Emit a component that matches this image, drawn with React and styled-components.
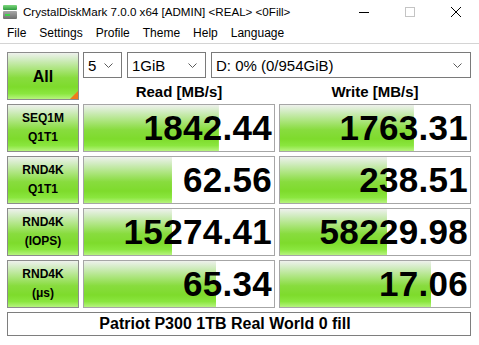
import React from 'react';
import styled, { createGlobalStyle } from 'styled-components';

const Global = createGlobalStyle`
  html, body { margin: 0; padding: 0; background: #fff; }
  body { font-family: "Liberation Sans", Arial, sans-serif; color: #000; overflow: hidden; }
`;

const greenGrad = `linear-gradient(to bottom, #eef1ec 0%, #d2ecc2 14%, #ade57f 34%, #88dc3e 54%, #7edb2c 74%, #8ae63e 88%, #b6f47e 100%)`;

const Window = styled.div`
  width: 479px;
  height: 345px;
  background: #fff;
  display: flex;
  flex-direction: column;
`;

const TitleBar = styled.div`
  height: 23px;
  display: flex;
  align-items: center;
  padding-left: 2px;
`;

const TitleText = styled.div`
  margin-left: 5px;
  font-size: 11.6px;
  flex: 1;
  white-space: nowrap;
`;

const WinControls = styled.div`
  display: flex;
  align-self: stretch;
`;

const WinButton = styled.div`
  width: 46px;
  display: flex;
  align-items: center;
  justify-content: center;
`;

const MenuBar = styled.div`
  height: 20px;
  border-bottom: 1px solid #d4d4d4;
  display: flex;
  align-items: center;
  gap: 13px;
  padding-left: 7px;
  font-size: 12px;
`;

const MenuItem = styled.span`
  white-space: nowrap;
`;

const Main = styled.div`
  padding: 8px 0 0 7px;
  display: grid;
  grid-template-columns: 72px 192px 192px;
  grid-template-rows: repeat(5, 48px) 24px;
  gap: 4px;
`;

const AllButton = styled.div`
  position: relative;
  box-sizing: border-box;
  border: 1px solid #8c8c8c;
  background: ${greenGrad};
  display: flex;
  align-items: center;
  justify-content: center;
  padding-top: 2px;
  font-weight: bold;
  font-size: 16px;
  overflow: hidden;
`;

const Corner = styled.div`
  position: absolute;
  right: 0;
  bottom: 0;
  width: 0;
  height: 0;
  border-left: 8px solid transparent;
  border-bottom: 8px solid #f07a1c;
`;

const HeaderCell = styled.div`
  grid-column: 2 / 4;
  display: flex;
  flex-direction: column;
`;

const ComboRow = styled.div`
  display: flex;
  gap: 5px;
  height: 26px;
`;

const Combo = styled.div`
  box-sizing: border-box;
  width: ${(p) => (p.$w ? `${p.$w}px` : 'auto')};
  flex: ${(p) => (p.$w ? 'none' : '1')};
  border: 1px solid #7a7a7a;
  background: #fff;
  display: flex;
  align-items: center;
  padding: 0 8px 0 4px;
  font-size: 15px;
  white-space: nowrap;
`;

const ComboText = styled.span`
  flex: 1;
`;

const HeadRow = styled.div`
  flex: 1;
  display: grid;
  grid-template-columns: 192px 192px;
  gap: 4px;
  align-items: center;
  padding-top: 5px;
`;

const HeadText = styled.div`
  text-align: center;
  font-weight: bold;
  font-size: 15px;
`;

const LabelBox = styled.div`
  box-sizing: border-box;
  border: 1px solid #8c8c8c;
  background: ${greenGrad};
  display: flex;
  flex-direction: column;
  align-items: center;
  justify-content: center;
  font-weight: bold;
  font-size: 12px;
  line-height: 19px;
`;

const ValueBox = styled.div`
  box-sizing: border-box;
  border: 1px solid #a6a6a6;
  background-color: #fff;
  background-image: ${greenGrad};
  background-repeat: no-repeat;
  display: flex;
  align-items: center;
  justify-content: flex-end;
  padding-right: 2px;
  font-weight: bold;
  font-size: 35px;
  letter-spacing: 0.3px;
`;

const Comment = styled.div`
  grid-column: 1 / 4;
  box-sizing: border-box;
  border: 1px solid #7e7e7e;
  display: flex;
  align-items: center;
  justify-content: center;
  padding-right: 28px;
  font-weight: bold;
  font-size: 16px;
`;

const Chevron = () => (
  <svg width="9" height="5" viewBox="0 0 9 5">
    <path d="M0.5 0.5 L4.5 4.5 L8.5 0.5" fill="none" stroke="#5a5a5a" strokeWidth="1" />
  </svg>
);

const AppIcon = () => (
  <svg width="16" height="16" viewBox="0 0 16 16">
    <defs>
      <linearGradient id="gtop" x1="0" y1="0" x2="0" y2="1">
        <stop offset="0" stopColor="#7ed87e" />
        <stop offset="1" stopColor="#2e9a3e" />
      </linearGradient>
      <linearGradient id="gbody" x1="0" y1="0" x2="0" y2="1">
        <stop offset="0" stopColor="#a8a8a8" />
        <stop offset="1" stopColor="#6e6e6e" />
      </linearGradient>
    </defs>
    <rect x="1" y="1" width="14" height="5" rx="1" fill="url(#gtop)" />
    <rect x="1" y="7" width="14" height="8" rx="1" fill="url(#gbody)" />
    <rect x="3" y="10" width="5" height="2" fill="#3ed24a" />
  </svg>
);

const rows = [
  { l1: 'SEQ1M', l2: 'Q1T1', r: '1842.44', rp: 71, w: '1763.31', wp: 70.5 },
  { l1: 'RND4K', l2: 'Q1T1', r: '62.56', rp: 46.3, w: '238.51', wp: 56.3 },
  { l1: 'RND4K', l2: '(IOPS)', r: '15274.41', rp: 46.3, w: '58229.98', wp: 56.3 },
  { l1: 'RND4K', l2: '(μs)', r: '65.34', rp: 69.5, w: '17.06', wp: 79.5 },
];

export default function App() {
  return (
    <Window>
      <Global />
      <TitleBar>
        <AppIcon />
        <TitleText>CrystalDiskMark 7.0.0 x64 [ADMIN] &lt;REAL&gt; &lt;0Fill&gt;</TitleText>
        <WinControls>
          <WinButton>
            <svg width="10" height="10" viewBox="0 0 10 10">
              <path d="M0 5.5 H10" stroke="#000" strokeWidth="1" />
            </svg>
          </WinButton>
          <WinButton>
            <svg width="10" height="10" viewBox="0 0 10 10">
              <rect x="0.5" y="0.5" width="9" height="9" fill="none" stroke="#c4c4c4" strokeWidth="1" />
            </svg>
          </WinButton>
          <WinButton>
            <svg width="10" height="10" viewBox="0 0 10 10">
              <path d="M0 0 L10 10 M10 0 L0 10" stroke="#000" strokeWidth="1" />
            </svg>
          </WinButton>
        </WinControls>
      </TitleBar>
      <MenuBar>
        {['File', 'Settings', 'Profile', 'Theme', 'Help', 'Language'].map((m) => (
          <MenuItem key={m}>{m}</MenuItem>
        ))}
      </MenuBar>
      <Main>
        <AllButton>
          All
          <Corner />
        </AllButton>
        <HeaderCell>
          <ComboRow>
            <Combo $w={39}>
              <ComboText>5</ComboText>
              <Chevron />
            </Combo>
            <Combo $w={79}>
              <ComboText>1GiB</ComboText>
              <Chevron />
            </Combo>
            <Combo>
              <ComboText>D: 0% (0/954GiB)</ComboText>
              <Chevron />
            </Combo>
          </ComboRow>
          <HeadRow>
            <HeadText>Read [MB/s]</HeadText>
            <HeadText>Write [MB/s]</HeadText>
          </HeadRow>
        </HeaderCell>
        {rows.map((row, i) => (
          <React.Fragment key={i}>
            <LabelBox>
              <span>{row.l1}</span>
              <span>{row.l2}</span>
            </LabelBox>
            <ValueBox style={{ backgroundSize: `${row.rp}% 100%` }}>{row.r}</ValueBox>
            <ValueBox style={{ backgroundSize: `${row.wp}% 100%` }}>{row.w}</ValueBox>
          </React.Fragment>
        ))}
        <Comment>Patriot P300 1TB Real World 0 fill</Comment>
      </Main>
    </Window>
  );
}
